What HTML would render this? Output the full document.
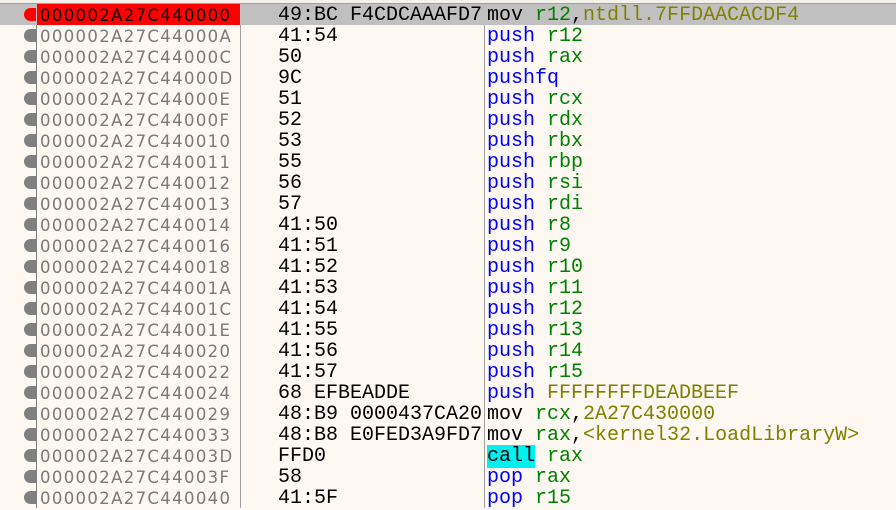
<!DOCTYPE html>
<html><head><style>
body{margin:0;width:896px;height:508px;overflow:hidden;background:#fdf8f2;position:relative;font-family:"Liberation Sans",sans-serif}
.hdr{position:absolute;left:0;top:0;width:896px;height:3px;border-bottom:1px solid #a0a0a0;background:#f4f0ea}
.vl{position:absolute;top:4px;bottom:0;width:1px;background:#a0a0a0}
.row{position:absolute;left:0;width:896px;height:21px;line-height:23px}
.dot{position:absolute;left:24px;top:4px;width:12px;height:13px;border-radius:7px 0 0 7px;background:#808080}
.ad{position:absolute;left:40px;font-family:"DejaVu Sans",sans-serif;font-size:16.5px;color:#7a7a7a;letter-spacing:1.35px}
.by{position:absolute;left:278px;font-family:"Liberation Mono",monospace;font-size:20px;color:#000;white-space:pre}
.ds{position:absolute;left:487px;font-family:"Liberation Mono",monospace;font-size:20px;white-space:pre;color:#000}
.k{color:#0000ff}.r{color:#008000}.n{color:#808000}
.cy{background:#00f0f0}
</style></head><body>
<div class="hdr"></div>
<div class="vl" style="left:36px;background:#808080;width:1px"></div>
<div class="vl" style="left:240px"></div>
<div class="vl" style="left:484px"></div>
<div class="row" style="top:4px;background:#c0c0c0"><div class="dot" style="background:#ff0000"></div><div style="position:absolute;left:37px;top:0;width:203px;height:21px;background:#ff0000"></div><span class="ad" style="color:#000">000002A27C440000</span><span class="by">49:BC F4CDCAAAFD7</span><span class="ds">mov <span class="r">r12</span>,<span class="n">ntdll.7FFDAACACDF4</span></span></div>
<div class="row" style="top:25px"><div class="dot"></div><span class="ad">000002A27C44000A</span><span class="by">41:54</span><span class="ds"><span class="k">push</span> <span class="r">r12</span></span></div>
<div class="row" style="top:46px"><div class="dot"></div><span class="ad">000002A27C44000C</span><span class="by">50</span><span class="ds"><span class="k">push</span> <span class="r">rax</span></span></div>
<div class="row" style="top:67px"><div class="dot"></div><span class="ad">000002A27C44000D</span><span class="by">9C</span><span class="ds"><span class="k">pushfq</span></span></div>
<div class="row" style="top:88px"><div class="dot"></div><span class="ad">000002A27C44000E</span><span class="by">51</span><span class="ds"><span class="k">push</span> <span class="r">rcx</span></span></div>
<div class="row" style="top:109px"><div class="dot"></div><span class="ad">000002A27C44000F</span><span class="by">52</span><span class="ds"><span class="k">push</span> <span class="r">rdx</span></span></div>
<div class="row" style="top:130px"><div class="dot"></div><span class="ad">000002A27C440010</span><span class="by">53</span><span class="ds"><span class="k">push</span> <span class="r">rbx</span></span></div>
<div class="row" style="top:151px"><div class="dot"></div><span class="ad">000002A27C440011</span><span class="by">55</span><span class="ds"><span class="k">push</span> <span class="r">rbp</span></span></div>
<div class="row" style="top:172px"><div class="dot"></div><span class="ad">000002A27C440012</span><span class="by">56</span><span class="ds"><span class="k">push</span> <span class="r">rsi</span></span></div>
<div class="row" style="top:193px"><div class="dot"></div><span class="ad">000002A27C440013</span><span class="by">57</span><span class="ds"><span class="k">push</span> <span class="r">rdi</span></span></div>
<div class="row" style="top:214px"><div class="dot"></div><span class="ad">000002A27C440014</span><span class="by">41:50</span><span class="ds"><span class="k">push</span> <span class="r">r8</span></span></div>
<div class="row" style="top:235px"><div class="dot"></div><span class="ad">000002A27C440016</span><span class="by">41:51</span><span class="ds"><span class="k">push</span> <span class="r">r9</span></span></div>
<div class="row" style="top:256px"><div class="dot"></div><span class="ad">000002A27C440018</span><span class="by">41:52</span><span class="ds"><span class="k">push</span> <span class="r">r10</span></span></div>
<div class="row" style="top:277px"><div class="dot"></div><span class="ad">000002A27C44001A</span><span class="by">41:53</span><span class="ds"><span class="k">push</span> <span class="r">r11</span></span></div>
<div class="row" style="top:298px"><div class="dot"></div><span class="ad">000002A27C44001C</span><span class="by">41:54</span><span class="ds"><span class="k">push</span> <span class="r">r12</span></span></div>
<div class="row" style="top:319px"><div class="dot"></div><span class="ad">000002A27C44001E</span><span class="by">41:55</span><span class="ds"><span class="k">push</span> <span class="r">r13</span></span></div>
<div class="row" style="top:340px"><div class="dot"></div><span class="ad">000002A27C440020</span><span class="by">41:56</span><span class="ds"><span class="k">push</span> <span class="r">r14</span></span></div>
<div class="row" style="top:361px"><div class="dot"></div><span class="ad">000002A27C440022</span><span class="by">41:57</span><span class="ds"><span class="k">push</span> <span class="r">r15</span></span></div>
<div class="row" style="top:382px"><div class="dot"></div><span class="ad">000002A27C440024</span><span class="by">68 EFBEADDE</span><span class="ds"><span class="k">push</span> <span class="n">FFFFFFFFDEADBEEF</span></span></div>
<div class="row" style="top:403px"><div class="dot"></div><span class="ad">000002A27C440029</span><span class="by">48:B9 0000437CA20</span><span class="ds">mov <span class="r">rcx</span>,<span class="n">2A27C430000</span></span></div>
<div class="row" style="top:424px"><div class="dot"></div><span class="ad">000002A27C440033</span><span class="by">48:B8 E0FED3A9FD7</span><span class="ds">mov <span class="r">rax</span>,<span class="n">&lt;kernel32.LoadLibraryW&gt;</span></span></div>
<div class="row" style="top:445px"><div class="dot"></div><span class="ad">000002A27C44003D</span><span class="by">FFD0</span><span class="ds"><span class="cy">call</span> <span class="r">rax</span></span></div>
<div class="row" style="top:466px"><div class="dot"></div><span class="ad">000002A27C44003F</span><span class="by">58</span><span class="ds"><span class="k">pop</span> <span class="r">rax</span></span></div>
<div class="row" style="top:487px"><div class="dot"></div><span class="ad">000002A27C440040</span><span class="by">41:5F</span><span class="ds"><span class="k">pop</span> <span class="r">r15</span></span></div>
</body></html>
